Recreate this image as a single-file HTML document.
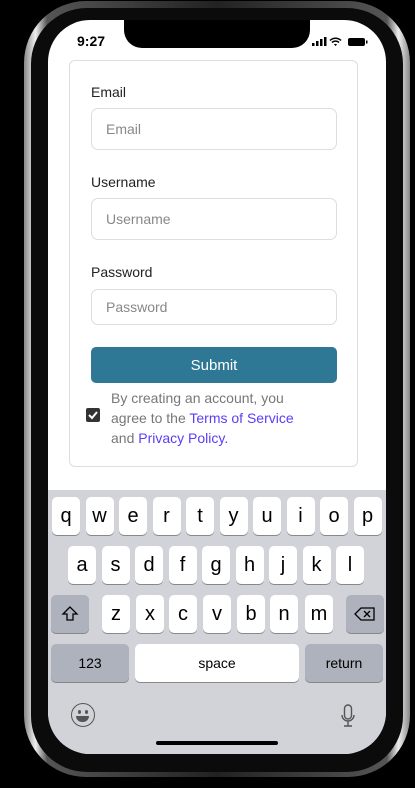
<!DOCTYPE html>
<html><head><style>
*{box-sizing:border-box;margin:0;padding:0}
body{width:415px;height:788px;background:#000;position:relative;overflow:hidden;font-family:"Liberation Sans",sans-serif}
.phone{position:absolute;left:24px;top:1px;width:386px;height:776px;border-radius:62px;background:linear-gradient(90deg,#888,#eee 3%,#555 6%,#222 50%,#555 94%,#eee 97%,#888);}
.inner{position:absolute;left:31px;top:8px;width:372px;height:764px;border-radius:56px;background:#0b0b0b}
.screen{position:absolute;left:48px;top:20px;width:338px;height:734px;border-radius:42px;background:#fff;overflow:hidden}
.notch{position:absolute;left:76px;top:0;width:186px;height:28px;background:#000;border-radius:0 0 18px 18px}
.time{position:absolute;left:29px;top:13px;font-size:14px;font-weight:bold;color:#000}
.card{position:absolute;left:21px;top:40px;width:289px;height:407px;border:1px solid #ddd;border-radius:6px}
.lab{position:absolute;left:21px;font-size:14px;color:#222}
.inp{position:absolute;left:21px;width:246px;border:1px solid #ddd;border-radius:7px;font-size:14px;color:#888;padding-left:14px;display:flex;align-items:center}
.btn{position:absolute;left:21px;top:286px;width:246px;height:36px;background:#2e7896;border-radius:5px;color:#fff;font-size:15px;display:flex;align-items:center;justify-content:center}
.chk{position:absolute;left:16px;top:347px;width:14px;height:14px;background:#333;border-radius:2px}
.txt{position:absolute;left:41px;top:327px;font-size:14px;line-height:20px;color:#777;width:240px;white-space:nowrap}
.txt span{color:#5b3df5}
.kb{position:absolute;left:0;top:470px;width:338px;height:264px;background:#d1d3d9}
.k{position:absolute;width:28px;height:38px;background:#fff;border-radius:5px;box-shadow:0 1px 0 #888;font-size:20px;color:#000;display:flex;align-items:center;justify-content:center}
.g{background:#adb2bc}
.s{font-size:14px}
</style></head><body>
<div class="phone"></div>
<div class="inner"></div>
<div class="screen">
<div class="notch"></div>
<div class="time">9:27</div>
<svg style="position:absolute;left:264px;top:17px" width="60" height="10">
<rect x="0" y="6" width="2.5" height="3" fill="#000"/><rect x="4" y="4" width="2.5" height="5" fill="#000"/><rect x="8" y="2" width="2.5" height="7" fill="#000"/><rect x="12" y="0" width="2.5" height="9" fill="#000"/>
<path d="M18 3.5a8 8 0 0 1 11 0M20 5.5a5 5 0 0 1 7 0" stroke="#000" stroke-width="1.5" fill="none"/><path d="M22 7.5l1.5 1.5 1.5-1.5a2 2 0 0 0-3 0z" fill="#000"/>
<rect x="36" y="1" width="17" height="8" rx="2" fill="#000"/><rect x="54" y="3.5" width="1.5" height="3" fill="#000"/>
</svg>
<div class="card">
<div class="lab" style="top:23px">Email</div>
<div class="inp" style="top:47px;height:42px">Email</div>
<div class="lab" style="top:113px">Username</div>
<div class="inp" style="top:137px;height:42px">Username</div>
<div class="lab" style="top:203px">Password</div>
<div class="inp" style="top:228px;height:36px">Password</div>
<div class="btn">Submit</div>
<div class="chk"><svg width="14" height="14"><path d="M3 7l3 3 5-6" stroke="#fff" stroke-width="2" fill="none"/></svg></div>
<div class="txt">By creating an account, you<br>agree to the <span>Terms of Service</span><br>and <span>Privacy Policy.</span></div>
</div>
<div class="kb">
<div class="k" style="left:4px;top:7px">q</div><div class="k" style="left:37.5px;top:7px">w</div><div class="k" style="left:71px;top:7px">e</div><div class="k" style="left:104.5px;top:7px">r</div><div class="k" style="left:138px;top:7px">t</div><div class="k" style="left:171.5px;top:7px">y</div><div class="k" style="left:205px;top:7px">u</div><div class="k" style="left:238.5px;top:7px">i</div><div class="k" style="left:272px;top:7px">o</div><div class="k" style="left:305.5px;top:7px">p</div>
<div class="k" style="left:20px;top:56px">a</div><div class="k" style="left:53.5px;top:56px">s</div><div class="k" style="left:87px;top:56px">d</div><div class="k" style="left:120.5px;top:56px">f</div><div class="k" style="left:154px;top:56px">g</div><div class="k" style="left:187.5px;top:56px">h</div><div class="k" style="left:221px;top:56px">j</div><div class="k" style="left:254.5px;top:56px">k</div><div class="k" style="left:288px;top:56px">l</div>
<div class="k g" style="left:3px;top:105px;width:38px"><svg width="18" height="18"><path d="M9 2L2 9h4v6h6V9h4z" stroke="#000" stroke-width="1.3" fill="none"/></svg></div>
<div class="k" style="left:54px;top:105px">z</div><div class="k" style="left:88px;top:105px">x</div><div class="k" style="left:121px;top:105px">c</div><div class="k" style="left:155px;top:105px">v</div><div class="k" style="left:189px;top:105px">b</div><div class="k" style="left:222px;top:105px">n</div><div class="k" style="left:257px;top:105px">m</div>
<div class="k g" style="left:298px;top:105px;width:38px"><svg width="22" height="16"><path d="M7 2h13v12H7L1 8z" stroke="#000" stroke-width="1.3" fill="none"/><path d="M10 5l6 6M16 5l-6 6" stroke="#000" stroke-width="1.3"/></svg></div>
<div class="k g s" style="left:3px;top:154px;width:78px">123</div>
<div class="k s" style="left:87px;top:154px;width:164px">space</div>
<div class="k g s" style="left:257px;top:154px;width:78px">return</div>
<div style="position:absolute;left:23px;top:213px;width:24px;height:24px;border:1.5px solid #555;border-radius:50%"><div style="position:absolute;left:6px;top:6px;width:3px;height:4px;background:#555;border-radius:50%"></div><div style="position:absolute;left:13px;top:6px;width:3px;height:4px;background:#555;border-radius:50%"></div><div style="position:absolute;left:4px;top:12px;width:13px;height:6px;background:#555;border-radius:0 0 7px 7px"></div></div>
<svg style="position:absolute;left:292px;top:214px" width="16" height="24"><rect x="4.5" y="1" width="7" height="14" rx="3.5" stroke="#555" stroke-width="1.4" fill="none"/><path d="M2 11a6 6 0 0 0 12 0M8 17v5M4 22h8" stroke="#555" stroke-width="1.4" fill="none"/></svg>
<div style="position:absolute;left:108px;top:251px;width:122px;height:4px;background:#000;border-radius:2px"></div>
</div>
</div>
</body></html>
